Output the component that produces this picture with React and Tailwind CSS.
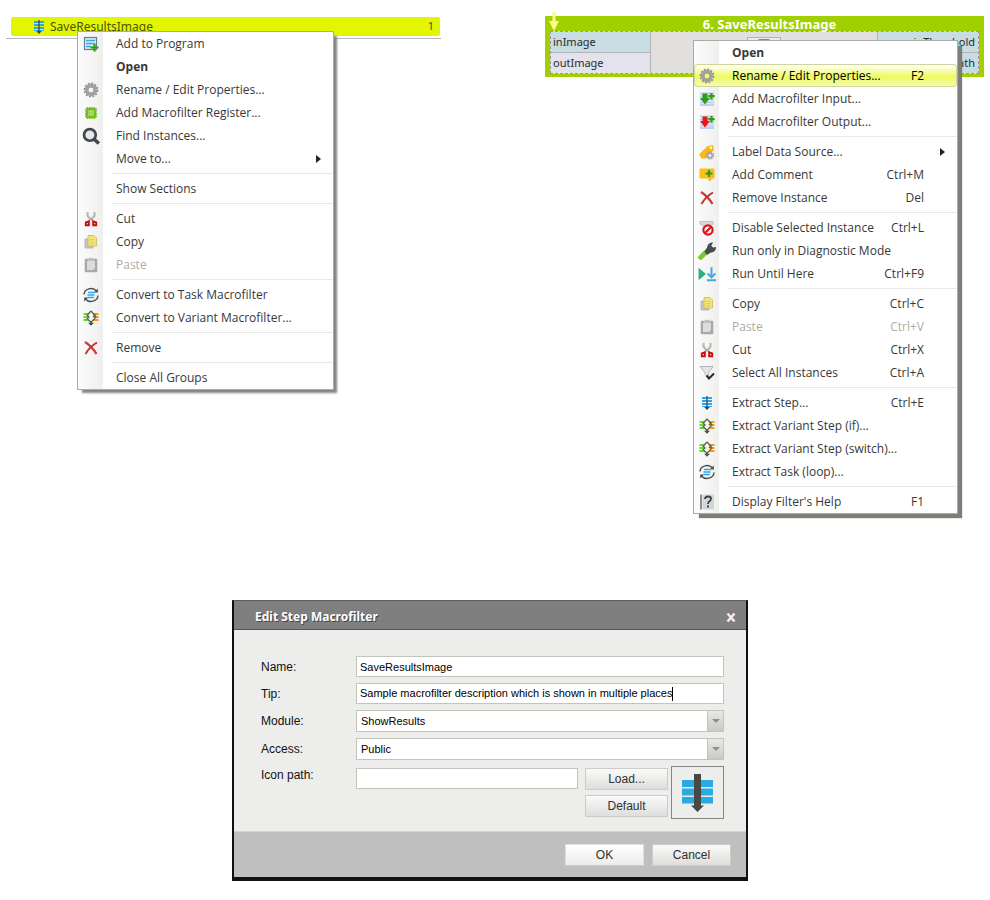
import clsx from "clsx";

/* ---------- icons ---------- */

function Svg({ children, size = "size-4", viewBox = "0 0 16 16" }) {
  return (
    <svg className={clsx("block shrink-0", size)} viewBox={viewBox} fill="none" aria-hidden="true">
      {children}
    </svg>
  );
}

const StepIcon = () => (
  <Svg>
    <path d="M3 2h10v2H3zM3 5h10v2H3zM3 8h10v2H3zM3 11h10v1H3z" fill="#2fa8ea" />
    <path d="M7.400 1h1.200v11h2.200L8 15l-2.800-3h2.200z" fill="#3d4347" />
  </Svg>
);

const AddToProgramIcon = () => (
  <Svg>
    <rect x="1.500" y="1.500" width="12" height="12" fill="#dfeaf1" stroke="#6d7e8c" strokeWidth="1.200" />
    <path d="M3 4.500h9M3 7.500h8M3 10.500h5" stroke="#35a9e6" strokeWidth="1.300" />
    <path d="M11.500 7.500v8M7.500 11.500h8" stroke="#2f9e16" strokeWidth="2.200" />
  </Svg>
);

const GearIcon = () => (
  <Svg>
    <circle cx="8" cy="8" r="6.600" stroke="#8e8e8e" strokeWidth="1.600" strokeDasharray="2 1.450" />
    <circle cx="8" cy="8" r="4.500" stroke="#a2a2a2" strokeWidth="3.400" />
    <circle cx="8" cy="8" r="2.900" stroke="#8a8a8a" strokeWidth="0.600" />
  </Svg>
);

const ChipIcon = () => (
  <Svg>
    <path
      d="M4.500 2v12M6.900 2v12M9.200 2v12M11.500 2v12M2 4.500h12M2 6.900h12M2 9.200h12M2 11.500h12"
      stroke="#74bd1c"
      strokeWidth="1.400"
    />
    <rect x="3" y="3" width="10" height="10" rx="1.500" fill="#74bd1c" />
    <rect x="5" y="5" width="6" height="6" rx="0.800" fill="#a4d56a" />
  </Svg>
);

const SearchIcon = () => (
  <Svg size="size-[18px]">
    <circle cx="7" cy="7" r="5.200" fill="#e3e7f0" stroke="#42474b" strokeWidth="2.400" />
    <path d="M11 11l4 3.600" stroke="#42474b" strokeWidth="3" />
  </Svg>
);

const CutIcon = () => (
  <Svg>
    <path d="M4.500 1v3.500L8 9M11.500 1v3.500L8 9" stroke="#b9b9b9" strokeWidth="2.200" />
    <path d="M8 7.500L5 11M8 7.500l3 3.500" stroke="#c99" strokeWidth="1.200" />
    <path d="M2.800 14.200v-2.700l3-1.200v3.900zM13.200 14.200v-2.700l-3-1.200v3.900z" stroke="#cf0909" strokeWidth="1.900" />
  </Svg>
);

const CopyIcon = () => (
  <Svg>
    <path d="M2 5h8v9H2z" fill="#c4c4c4" stroke="#adadad" strokeWidth="0.800" />
    <path d="M5 1.500h6l2.500 2.500v8H5z" fill="#f1e27a" stroke="#cdbd55" strokeWidth="0.800" />
    <path d="M7 5.500h4.500M7 7.500h4.500M7 9.500h4.500" stroke="#ddcc62" strokeWidth="0.800" />
  </Svg>
);

const PasteIcon = () => (
  <Svg>
    <rect x="1.700" y="1.700" width="12.600" height="13.600" rx="1.200" fill="#a9a9a9" />
    <path d="M4 4h8v7l-2 2H4z" fill="#dcdcdc" />
    <path d="M5.500 1h5v3h-5z" fill="#b9b9b9" stroke="#d9d9d9" strokeWidth="0.600" />
  </Svg>
);

const TaskIcon = () => (
  <Svg>
    <path d="M1 7.500A7 6.300 0 0 1 13.500 4M15 8.500A7 6.300 0 0 1 2.500 12" stroke="#474c50" strokeWidth="1.400" />
    <path d="M14.800 1.500v4h-4zM1.200 14.500v-4h4z" fill="#474c50" />
    <path d="M5 5.500h6.500M4.500 8h7M4.500 10.500H11" stroke="#2fa8ea" strokeWidth="1.500" />
  </Svg>
);

const VariantIcon = () => (
  <Svg>
    <path d="M0.500 3h5.500v2H.5zM.5 6h4.500v2H.5zM.5 9h5.500v2H.5z" fill="#5fe02c" />
    <path d="M10 3h5.500v2H10zM11 6h4.500v2H11zM10 9h5.500v2H10z" fill="#f79a22" />
    <path d="M8 1L4.800 4.500M8 1l3.200 3.500M3.500 4.500L6 7l-2.500 2.500M12.500 4.500L10 7M10.500 4l2.500 3-5 5.500L5 9.500" stroke="#555f40" strokeWidth="1.200" />
    <path d="M7.300 11.500h1.400v1.300H11l-3 3-3-3h2.300z" fill="#4b5048" />
  </Svg>
);

const RemoveIcon = () => (
  <Svg>
    <path d="M2 2c4 2.500 8.500 7 11.500 12" stroke="#cf3a3c" strokeWidth="2.300" />
    <path d="M14 2.500C9.500 5 5 9.500 2.500 14" stroke="#c43034" strokeWidth="2" />
  </Svg>
);

function AddPortIcon({ color }) {
  return (
    <Svg>
      <path d="M1 2.500h14M1 5.500h14M1 8.500h14M1 11.500h14M1 14h14" stroke="#bccff5" strokeWidth="1.800" />
      <path d="M3.500 2.500h5V7H11l-5 6.500L1 7h2.500z" fill={color} />
      <path d="M12.500 2v6.500M9.300 5.200h6.400" stroke="#2f9e16" strokeWidth="2.200" />
    </Svg>
  );
}

const LabelIcon = () => (
  <Svg>
    <path d="M0.500 10L8.500 2 14 1l1 5-8.500 8.500H2.500q-2-2-2-4.500z" fill="#fdb813" />
    <circle cx="12" cy="3.800" r="1.200" fill="#fff" />
    <circle cx="11" cy="11.500" r="3.600" stroke="#9d9d9d" strokeWidth="1.400" strokeDasharray="1.600 1.200" />
    <circle cx="11" cy="11.500" r="2.300" fill="#eee" stroke="#a5a5a5" strokeWidth="1.400" />
  </Svg>
);

const CommentIcon = () => (
  <Svg>
    <path d="M1.500 1.500h13q1 0 1 1v8q0 1-1 1H13L11 15l-2.500-3.500h-7q-1 0-1-1v-8q0-1 1-1z" fill="#fdbe16" />
    <path d="M10 3v7M6.500 6.500h7" stroke="#2f9e16" strokeWidth="2.200" />
  </Svg>
);

const DisableIcon = () => (
  <Svg>
    <path d="M1 1.500h13v2.500l-3 2H4.500L1 4z" fill="#d8d8d8" stroke="#b9b9b9" strokeWidth="0.800" />
    <circle cx="9" cy="10" r="4.600" fill="#fff" stroke="#e3101a" strokeWidth="2.200" />
    <path d="M6 13l6-6" stroke="#e3101a" strokeWidth="2.200" />
  </Svg>
);

const WrenchIcon = () => (
  <Svg size="size-[18px]">
    <path d="M1 15.200L7 9" stroke="#7bc92a" strokeWidth="4.200" />
    <path d="M5.500 8.500L8 5q.5-4.500 5.500-4.800l-1.700 3.200 1.500 1.500 2.700-.5q.3 4.600-5 5.200L8 11.500z" fill="#474c50" />
  </Svg>
);

const RunUntilIcon = () => (
  <Svg size="size-[18px]">
    <path d="M0.500 2.500L7 8 .5 13.500z" fill="#2bb07c" />
    <path d="M12 2v9M8.500 7.500L12 11l3.500-3.500M8 13.500h8" stroke="#3cace0" strokeWidth="1.800" />
  </Svg>
);

const SelectAllIcon = () => (
  <Svg>
    <path d="M1 1.500h13L9.500 7.500v5L6 9.500v-2z" fill="#e4e4e4" stroke="#b5b5b5" />
    <path d="M7.500 10.500l2.500 3 5-5" stroke="#262626" strokeWidth="2" />
  </Svg>
);

const HelpIcon = () => (
  <Svg>
    <path d="M3.500 0.500H15v15H3.500z" fill="#d3d6d8" />
    <path d="M2 0.500v15" stroke="#474c50" strokeWidth="1.200" />
    <path d="M6 5q0-2.500 3-2.500t3 2.300q0 1.500-1.500 2.400T9 10" stroke="#3b4044" strokeWidth="1.800" />
    <path d="M8 11.500h2v2H8z" fill="#3b4044" />
  </Svg>
);

/* ---------- context menus ---------- */

const SEP = { separator: true };

const PROJECT_MENU = [
  { label: "Add to Program", icon: <AddToProgramIcon /> },
  { label: "Open", bold: true },
  { label: "Rename / Edit Properties...", icon: <GearIcon /> },
  { label: "Add Macrofilter Register...", icon: <ChipIcon /> },
  { label: "Find Instances...", icon: <SearchIcon /> },
  { label: "Move to...", submenu: true },
  SEP,
  { label: "Show Sections" },
  SEP,
  { label: "Cut", icon: <CutIcon /> },
  { label: "Copy", icon: <CopyIcon /> },
  { label: "Paste", icon: <PasteIcon />, disabled: true },
  SEP,
  { label: "Convert to Task Macrofilter", icon: <TaskIcon /> },
  { label: "Convert to Variant Macrofilter...", icon: <VariantIcon /> },
  SEP,
  { label: "Remove", icon: <RemoveIcon /> },
  SEP,
  { label: "Close All Groups" },
];

const INSTANCE_MENU = [
  { label: "Open", bold: true },
  { label: "Rename / Edit Properties...", icon: <GearIcon />, keys: "F2", active: true },
  { label: "Add Macrofilter Input...", icon: <AddPortIcon color="#2f9e16" /> },
  { label: "Add Macrofilter Output...", icon: <AddPortIcon color="#f01414" /> },
  SEP,
  { label: "Label Data Source...", icon: <LabelIcon />, submenu: true },
  { label: "Add Comment", icon: <CommentIcon />, keys: "Ctrl+M" },
  { label: "Remove Instance", icon: <RemoveIcon />, keys: "Del" },
  SEP,
  { label: "Disable Selected Instance", icon: <DisableIcon />, keys: "Ctrl+L" },
  { label: "Run only in Diagnostic Mode", icon: <WrenchIcon /> },
  { label: "Run Until Here", icon: <RunUntilIcon />, keys: "Ctrl+F9" },
  SEP,
  { label: "Copy", icon: <CopyIcon />, keys: "Ctrl+C" },
  { label: "Paste", icon: <PasteIcon />, keys: "Ctrl+V", disabled: true },
  { label: "Cut", icon: <CutIcon />, keys: "Ctrl+X" },
  { label: "Select All Instances", icon: <SelectAllIcon />, keys: "Ctrl+A" },
  SEP,
  { label: "Extract Step...", icon: <StepIcon />, keys: "Ctrl+E" },
  { label: "Extract Variant Step (if)...", icon: <VariantIcon /> },
  { label: "Extract Variant Step (switch)...", icon: <VariantIcon /> },
  { label: "Extract Task (loop)...", icon: <TaskIcon /> },
  SEP,
  { label: "Display Filter's Help", icon: <HelpIcon />, keys: "F1" },
];

function MenuItem({ item }) {
  return (
    <button
      type="button"
      role="menuitem"
      disabled={item.disabled}
      className={clsx(
        "flex h-[23px] w-full items-center text-left text-[12px]",
        item.disabled ? "text-[#adada3]" : "text-[#383838]",
        item.active &&
          "rounded-sm bg-linear-to-b from-[#fdffe6] from-10% via-[#eefa5a] via-55% to-[#f7fcb4] text-black ring-1 ring-[#d0d5a0] ring-inset"
      )}
    >
      <span className="flex w-[26px] shrink-0 justify-center">{item.icon}</span>
      <span className={clsx("ml-3 flex-1 whitespace-nowrap", item.bold && "font-bold")}>
        {item.label}
      </span>
      {item.keys && <span className="mr-[33px]">{item.keys}</span>}
      {item.submenu && (
        <svg className="mr-3 h-2 w-[5px]" viewBox="0 0 5 8" aria-hidden="true">
          <path d="M0 0l5 4-5 4z" fill="#222" />
        </svg>
      )}
    </button>
  );
}

function ContextMenu({ items, label, className }) {
  return (
    <div
      role="menu"
      aria-label={label}
      className={clsx(
        "relative border border-[#a9aca6] bg-white bg-linear-to-r from-[#fcfcfc] to-[#efefee] bg-[length:25px_100%] bg-no-repeat font-['Open_Sans',sans-serif]",
        className
      )}
    >
      {items.map((item, i) =>
        item.separator ? (
          <div key={i} role="separator" className="flex h-[7px] items-center pl-[34px]">
            <div className="h-px w-full bg-[#e9e9e9]" />
          </div>
        ) : (
          <MenuItem key={i} item={item} />
        )
      )}
    </div>
  );
}

/* ---------- sections ---------- */

function ProjectTree() {
  return (
    <section className="pt-px pr-1">
      <div className="border-b border-[#b4b4b4] pr-px pb-0.5 pl-[5px]">
        <div className="flex h-[19px] items-center rounded-xs bg-[#e1f600] pr-1.5 pl-5 font-['Noto_Sans',sans-serif] text-[11px] text-[#4c5210]">
          <StepIcon />
          <span className="ml-[3px] flex-1 text-[12px]">SaveResultsImage</span>
          <span>1</span>
        </div>
      </div>
      <ContextMenu
        items={PROJECT_MENU}
        label="Macrofilter"
        className="-mt-2 ml-[71px] w-[257px] shadow-[4px_4px_2px_-1px_#858585]"
      />
    </section>
  );
}

function FilterInstance() {
  return (
    <section>
      <div className="relative bg-[#a0d000] px-[5px] pb-[3px] font-['Noto_Sans',sans-serif]">
        <svg className="absolute -top-1 left-1 h-[19px] w-[10px]" viewBox="0 0 10 19" aria-hidden="true">
          <path d="M3.500 0h3v9H10l-5 10L0 9h3.500z" fill="#fbfa8c" />
        </svg>
        <h2 className="h-[15px] pl-[10px] text-center text-[13px] leading-[16px] font-bold text-white">
          6. SaveResultsImage
        </h2>
        <div className="flex h-[43px] justify-between border border-dashed border-[#9a9a9a] bg-[#e1e0de] text-[11px] text-[#2b2b2b]">
          <div className="grid w-[100px] grid-rows-2 border-r border-[#b4b4b4]">
            <span className="flex items-center border-b border-[#b4b4b4] bg-[#c8dde3] pl-0.5">inImage</span>
            <span className="flex items-center bg-[#e4e2ec] pl-0.5">outImage</span>
          </div>
          <div className="mt-[5px] h-4 w-[34px] border border-[#b4b4b4] bg-[#ececec]">
            <svg className="mx-auto h-3 w-3" viewBox="0 0 12 12" aria-hidden="true">
              <path d="M0 1h12L6 8z" fill="#8a8a8a" />
            </svg>
          </div>
          <div className="grid w-[101px] grid-rows-2 border-l border-[#b4b4b4] bg-[#c8dde3] text-right">
            <span className="flex items-center justify-end border-b border-[#b4b4b4] pr-[3px]">inThreshold</span>
            <span className="flex items-center justify-end pr-[3px]">inPath</span>
          </div>
        </div>
      </div>
      <ContextMenu
        items={INSTANCE_MENU}
        label="Filter instance"
        className="-mt-[37px] ml-[148px] w-[265px] shadow-[5px_5px_1px_-1px_#7c7f78]"
      />
    </section>
  );
}

function Select({ id, value }) {
  return (
    <div className="relative">
      <select
        id={id}
        defaultValue={value}
        className="block h-[22px] w-full appearance-none border border-[#c3c5bb] bg-white pl-1 text-[11px] text-black"
      >
        <option>{value}</option>
      </select>
      <span className="pointer-events-none absolute inset-y-px right-px flex w-4 items-center justify-center border-l border-[#c3c5bb] bg-linear-to-b from-[#e9e9e6] to-[#c9cac5]">
        <svg className="h-1 w-2" viewBox="0 0 8 4" aria-hidden="true">
          <path d="M0 0h8L4 4z" fill="#8d8f89" />
        </svg>
      </span>
    </div>
  );
}

function Button({ children, className }) {
  return (
    <button
      type="button"
      className={clsx(
        "h-[22px] border bg-linear-to-b text-[12px] text-[#303030]",
        className || "border-[#cbccc8] from-[#fafafa] to-[#dededc]"
      )}
    >
      {children}
    </button>
  );
}

function EditDialog() {
  return (
    <div
      role="dialog"
      aria-label="Edit Step Macrofilter"
      className="w-full max-w-[516px] border-2 border-t border-b-4 border-[#111] border-t-[#5c5c5c] bg-[#ededeb] font-['Liberation_Sans',sans-serif] text-[12px] text-[#111]"
    >
      <header className="flex h-[29px] items-center justify-between border-b border-[#555] bg-[#7f7f7f] pt-1 pr-2.5 pl-[21px] font-['Noto_Sans',sans-serif] font-bold text-white">
        <h2 className="text-shadow-[1px_1px_0_#444]">Edit Step Macrofilter</h2>
        <button type="button" aria-label="Close" className="text-[#fdeaea]">
          <svg className="h-[9px] w-[10px]" viewBox="0 0 10 9" aria-hidden="true">
            <path d="M1.500 0.500l7 8M8.500 0.500l-7 8" stroke="currentColor" strokeWidth="2.400" />
          </svg>
        </button>
      </header>

      <form className="grid grid-cols-[95px_1fr] items-center gap-y-1.5 pt-[26px] pr-[22px] pb-3 pl-[27px]">
        <label htmlFor="name">Name:</label>
        <input
          id="name"
          defaultValue="SaveResultsImage"
          className="h-[21px] border border-[#c3c5bb] bg-white pl-[3px] text-[11px] text-black outline-none"
        />

        <label htmlFor="tip">Tip:</label>
        <div className="flex h-[21px] items-center border border-[#c3c5bb] bg-white pl-[3px]">
          <input
            id="tip"
            defaultValue="Sample macrofilter description which is shown in multiple places"
            className="field-sizing-content text-[11px] text-black outline-none"
          />
          <span className="h-3.5 w-px bg-black" />
        </div>

        <label htmlFor="module">Module:</label>
        <Select id="module" value="ShowResults" />

        <label htmlFor="access">Access:</label>
        <Select id="access" value="Public" />

        <label htmlFor="icon-path" className="self-start">
          Icon path:
        </label>
        <div className="flex items-start">
          <input
            id="icon-path"
            className="mt-0.5 h-[21px] min-w-0 flex-1 border border-[#c3c5bb] bg-white pl-[3px] outline-none"
          />
          <div className="mt-0.5 mr-[3px] ml-[7px] flex w-[83px] flex-col gap-[5px]">
            <Button>Load...</Button>
            <Button>Default</Button>
          </div>
          <div className="flex size-[53px] items-center justify-center border border-[#858585]">
            <svg className="h-10 w-8" viewBox="0 0 32 40" aria-hidden="true">
              <path d="M0 7h31v7H0zM0 15.500h31v7H0zM0 24h31v6.500H0z" fill="#29abe2" />
              <path d="M12 1h7v31.500h3l-6.500 6.500L9 32.500h3z" fill="#484848" />
            </svg>
          </div>
        </div>
      </form>

      <footer className="flex h-[46px] items-center justify-end gap-2 border-t border-[#d4d4d4] bg-[#bfbfbf] pr-[15px]">
        <Button className="w-[79px] border-[#ddd] border-b-[#cfe04a] from-white to-[#ececea]">OK</Button>
        <Button className="w-[79px] border-[#cbccc8] from-[#fafafa] to-[#dededc]">Cancel</Button>
      </footer>
    </div>
  );
}

export default function App() {
  return (
    <main className="bg-white pt-4 pb-4">
      <div className="grid grid-cols-2 gap-x-[100px] px-1.5">
        <ProjectTree />
        <FilterInstance />
      </div>
      <div className="mt-[86px] flex justify-center pr-2.5">
        <EditDialog />
      </div>
    </main>
  );
}
